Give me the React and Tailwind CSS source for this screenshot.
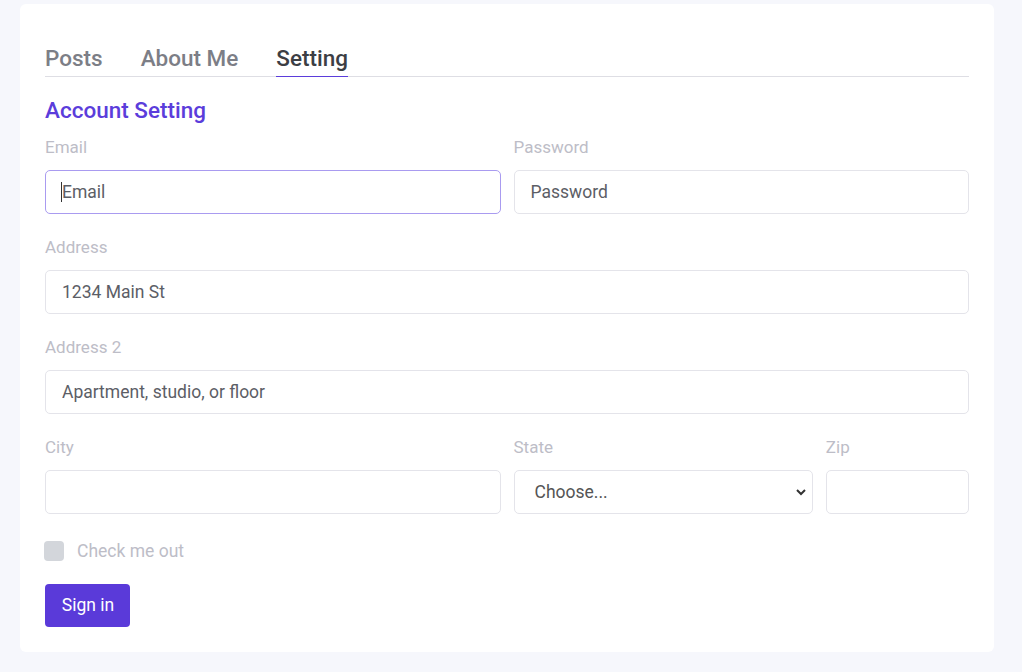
import React from "react";

const font = { fontFamily: "Roboto, 'Noto Sans', sans-serif" };

function Field({ label, span, children }) {
  return (
    <div className={`${span} flex flex-col`}>
      <label className="text-[17px] leading-[24px] text-[#bdbdc7] mb-[11px]">{label}</label>
      {children}
    </div>
  );
}

const baseCls =
  "h-[44px] w-full rounded-[5px] border bg-white px-[16px] text-[17.5px] text-[#555] placeholder:text-[#5c5e66] outline-none";
const inputCls = `${baseCls} border-[#e4e4ea]`;
const focusCls = `${baseCls} border-[#a99bf0]`;

export default function App() {
  return (
    <div className="min-h-[672px] bg-[#f6f7fc] pl-[20px] pr-[28px] pt-[4px]" style={font}>
      <div className="rounded-[6px] bg-white px-[25px] pt-[41px] pb-[25px] h-[648px]">
        <div className="flex gap-[38px] border-b border-[#dedee4]">
          <div className="text-[22.5px] font-medium leading-[26px] text-[#7c7e86] pb-[5px]">Posts</div>
          <div className="text-[22.5px] font-medium leading-[26px] text-[#7c7e86] pb-[5px]">About Me</div>
          <div className="text-[22.5px] font-medium leading-[26px] text-[#3c3e44] pb-[4px] border-b border-[#5b3ddb] -mb-px">Setting</div>
        </div>
        <h2 className="mt-[20px] text-[22.5px] font-medium leading-[26px] text-[#5b3ddb]">Account Setting</h2>
        <div className="mt-[12px] grid grid-cols-12 gap-x-[13px] gap-y-[21px]">
          <Field label="Email" span="col-span-6">
            <div className="relative">
              <input className={focusCls} placeholder="Email" />
              <span className="absolute left-[16px] top-[12px] h-[20px] w-px bg-[#333]" />
            </div>
          </Field>
          <Field label="Password" span="col-span-6">
            <input className={inputCls} placeholder="Password" />
          </Field>
          <Field label="Address" span="col-span-12">
            <input className={inputCls} placeholder="1234 Main St" />
          </Field>
          <Field label="Address 2" span="col-span-12">
            <input className={inputCls} placeholder="Apartment, studio, or floor" />
          </Field>
          <Field label="City" span="col-span-6">
            <input className={inputCls} />
          </Field>
          <Field label="State" span="col-span-4">
            <div className="relative">
              <select className={`${inputCls} appearance-none pl-[20px] text-[#222]`}>
                <option>Choose...</option>
              </select>
              <svg className="absolute right-[6px] top-[17px] pointer-events-none" width="12" height="10" viewBox="0 0 12 10">
                <path d="M2 3 L6 7 L10 3" fill="none" stroke="#333" strokeWidth="2" />
              </svg>
            </div>
          </Field>
          <Field label="Zip" span="col-span-2">
            <input className={inputCls} />
          </Field>
        </div>
        <div className="mt-[25px] flex items-center">
          <span className="ml-[-1px] h-[20px] w-[20px] rounded-[4px] bg-[#d3d6db]" />
          <span className="ml-[13px] text-[17.5px] leading-[24px] text-[#bdbdc7]">Check me out</span>
        </div>
        <button className="mt-[21px] h-[43px] w-[85px] rounded-[4px] bg-[#5a3ad9] pl-[1px] text-[17.5px] text-white">Sign in</button>
      </div>
    </div>
  );
}
